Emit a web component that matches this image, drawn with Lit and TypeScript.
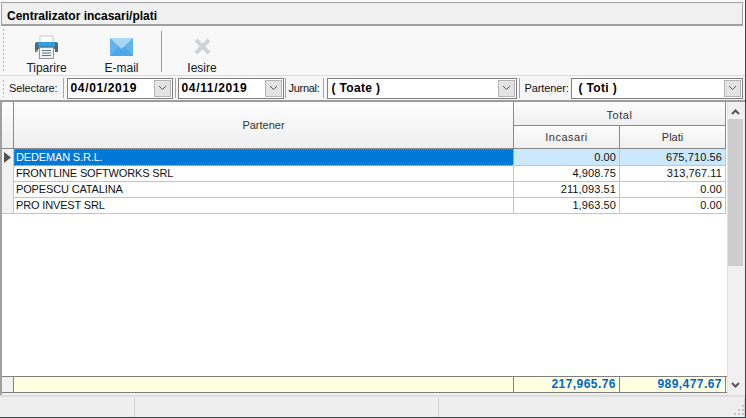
import { LitElement, html, css, svg } from "lit";
import { customElement } from "lit/decorators.js";

const rows = [
  ["DEDEMAN S.R.L.", "0.00", "675,710.56"],
  ["FRONTLINE SOFTWORKS SRL", "4,908.75", "313,767.11"],
  ["POPESCU CATALINA", "211,093.51", "0.00"],
  ["PRO INVEST SRL", "1,963.50", "0.00"],
];

const chevronDown = svg`<svg width="9" height="6" viewBox="0 0 9 6"><path d="M1 1l3.5 3.5L8 1" fill="none" stroke="#555" stroke-width="1"/></svg>`;

@customElement("app-root")
export class AppRoot extends LitElement {
  static styles = css`
    :host { display: flex; flex-direction: column; width: 746px; height: 418px; box-sizing: border-box; background: #f0f0f0; font-family: "Liberation Sans", Arial, sans-serif; font-size: 11px; color: #000; overflow: hidden; border-bottom: 1px solid #1f5050; border-right: 1px solid #1f5050; }
    .titlewrap { flex: none; background: #f8f8f8; padding: 2px 2px 0 1px; }
    .title { height: 24px; box-sizing: border-box; padding: 6px 0 0 5px; font-weight: bold; font-size: 12px; line-height: 14px; background: #f0f0f0; border-top: 1px solid #a0a0a0; border-left: 1px solid #a0a0a0; border-right: 1px solid #a0a0a0; border-bottom: 2px solid #a0a0a0; }
    .toolbar { height: 50px; flex: none; box-sizing: border-box; display: flex; background: #f8f8f8; border-bottom: 1px solid #dcdcdc; padding: 2px 0 0 2px; }
    .grip { width: 3px; margin-right: 4px; flex: none; background-image: radial-gradient(#b0b0b0 1px, transparent 1px); background-size: 3px 4px; height: 44px; }
    .grip.small { height: 18px; margin-right: 4px; }
    .tool { display: flex; flex-direction: column; align-items: center; width: 75px; font-size: 12px; line-height: 14px; color: #10202a; }
    .tool.wide { width: 80px; }
    .tool .ic { height: 30px; padding-top: 4px; display: flex; align-items: center; justify-content: center; }
    .sep { width: 1px; height: 41px; background: #9a9a9a; margin: 3px 0 0 2px; flex: none; }
    .filters { height: 26px; flex: none; box-sizing: border-box; display: flex; align-items: center; background: #f6f6f6; border-bottom: 2px solid #9c9c9c; padding: 0 2px 0 2px; }
    .lab { font-size: 11px; line-height: 20px; letter-spacing: -0.1px; color: #111; white-space: nowrap; }
    .lab.sel { padding-right: 5px; }
    .lab.jur { padding: 0 4px 0 3px; letter-spacing: -0.3px; }
    .lab.par { padding: 0 2px 0 4px; }
    .bar { width: 1px; height: 20px; background: #a8a8a8; flex: none; }
    .combo { height: 21px; box-sizing: border-box; border: 1px solid #7f7f7f; background: #fff; display: flex; align-items: center; font-weight: bold; font-size: 12px; padding: 0 1px 0 3px; }
    .combo span { flex: 1; white-space: pre; letter-spacing: 0.35px; margin-top: -1px; }
    .combo.date { width: 106px; margin: 0 2px 0 3px; }
    .combo.date span { letter-spacing: 0.65px; }
    .combo.date.second { margin: 0 1px 0 2px; width: 106px; }
    .combo.jurnal { width: 190px; margin: 0 2px 0 3px; }
    .combo.part { flex: 1; }
    .btn { width: 17px; height: 17px; background: #e3e3e3; border: 1px solid #b4b4b4; box-sizing: border-box; display: flex; align-items: center; justify-content: center; flex: none; }
    .body { flex: 1; min-height: 0; display: flex; background: #fff; border-left: 2px solid #a0a0a0; }
    .grid { width: 725px; flex: none; display: flex; flex-direction: column; min-width: 0; }
    .head { display: grid; grid-template-columns: 12px 500px 106px 106px; grid-template-rows: 24px 23px; flex: none; }
    .hc { background: linear-gradient(#fdfdfd, #efefef); border-right: 1px solid #8a8a8a; border-bottom: 1px solid #8a8a8a; box-sizing: border-box; display: flex; align-items: center; justify-content: center; color: #333; font-size: 11px; }
    .span2 { grid-row: span 2; }
    .span2c { grid-column: span 2; padding-top: 2px; letter-spacing: 0.6px; }
    .hc.wide { letter-spacing: 0.5px; }
    .rows { flex: 1; min-height: 0; }
    .row { display: grid; grid-template-columns: 12px 500px 106px 106px; height: 16px; box-sizing: border-box; line-height: 15px; font-size: 11px; color: #111; }
    .row > div { border-right: 1px solid #c4c4c4; border-bottom: 1px solid #c4c4c4; box-sizing: border-box; white-space: nowrap; }
    .ind { background: #f2f2f2; display: flex; align-items: center; justify-content: center; }
    .name { padding: 1px 0 0 2px; letter-spacing: -0.15px; }
    .num { text-align: right; padding: 1px 3px 0 0; letter-spacing: 0.1px; }
    .row.sel .name { background: #0078d7; color: #fff; outline: 1px dotted #e07020; outline-offset: -1px; }
    .row.sel .num { background: #cce8ff; }
    .foot { display: grid; grid-template-columns: 12px 500px 106px 106px; height: 15px; flex: none; border-top: 1px solid #808080; border-bottom: 1px solid #808080; }
    .foot > div { background: #ffffe1; border-right: 1px solid #808080; box-sizing: border-box; text-align: right; padding-right: 3px; font-weight: bold; font-size: 12px; line-height: 15px; color: #0066cc; letter-spacing: 0.45px; }
    .foot > .ind { background: #f2f2f2; padding: 0; }
    .gap { height: 2px; flex: none; background: #f0f0f0; }
    .scroll { flex: 1; background: #f0f0f0; border-left: 1px solid #e2e2e2; box-sizing: border-box; display: flex; flex-direction: column; align-items: flex-start; }
    .sb { width: 15px; height: 17px; flex: none; display: flex; align-items: center; justify-content: center; }
    .sb.up { padding-top: 3px; box-sizing: content-box; height: 14px; }
    .thumb { width: 15px; height: 147px; background: #cdcdcd; flex: none; }
    .sp { flex: 1; }
    .sb.down { margin-bottom: 2px; }
    .status { height: 22px; flex: none; box-sizing: border-box; display: grid; grid-template-columns: 135px 304px 1fr; background: #eeeeee; border-top: 2px solid #dcdcdc; padding-top: 1px; position: relative; }
    .status div { border-right: 1px solid #d4d4d4; }
    .status div:last-child { border-right: none; }
    .rz { position: absolute; right: 0; bottom: 1px; }
  `;

  private printer() {
    return svg`<svg width="23" height="24" viewBox="0 0 23 24">
      <rect x="5" y="1" width="13" height="8" fill="#fff" stroke="#c4c8cc"/>
      <path d="M2 7h19a2 2 0 0 1 2 2v8h-3v-3H3v3H0V9a2 2 0 0 1 2-2z" fill="#56676f"/>
      <rect x="3" y="7" width="17" height="4.5" fill="#2f9fe0"/>
      <rect x="1" y="15" width="2" height="2" fill="#5fc88a"/>
      <rect x="4.5" y="12.5" width="14" height="11" fill="#eef0f2" stroke="#8b979e"/>
      <path d="M7 15.5h9M7 18h9M7 20.5h9" stroke="#6c7a82" stroke-width="1.2"/>
    </svg>`;
  }
  private mail() {
    return svg`<svg width="23" height="18" viewBox="0 0 23 18">
      <rect width="23" height="18" fill="#62b3ed"/>
      <path d="M0 0h23L11.5 11z" fill="#a8d8f6"/>
      <path d="M0 18l9-9 2.5 2.5L14 9l9 9z" fill="#4ca6e8"/>
    </svg>`;
  }
  private close() {
    return svg`<svg width="17" height="17" viewBox="0 0 17 17"><path d="M2 2l13 13M15 2L2 15" stroke="#cfd3d6" stroke-width="4"/></svg>`;
  }

  render() {
    return html`
      <div class="titlewrap"><div class="title">Centralizator incasari/plati</div></div>
      <div class="toolbar">
        <div class="grip"></div>
        <div class="tool"><div class="ic">${this.printer()}</div>Tiparire</div>
        <div class="tool"><div class="ic">${this.mail()}</div>E-mail</div>
        <div class="sep"></div>
        <div class="tool wide"><div class="ic">${this.close()}</div>Iesire</div>
      </div>
      <div class="filters">
        <div class="grip small"></div>
        <div class="lab sel">Selectare:</div>
        <div class="bar"></div>
        <div class="combo date"><span>04/01/2019</span><div class="btn">${chevronDown}</div></div>
        <div class="bar"></div>
        <div class="combo date second"><span>04/11/2019</span><div class="btn">${chevronDown}</div></div>
        <div class="bar"></div>
        <div class="lab jur">Jurnal:</div>
        <div class="bar"></div>
        <div class="combo jurnal"><span>( Toate )</span><div class="btn">${chevronDown}</div></div>
        <div class="bar"></div>
        <div class="lab par">Partener:</div>
        <div class="combo part"><span> ( Toti )</span><div class="btn">${chevronDown}</div></div>
      </div>
      <div class="body">
        <div class="grid">
          <div class="head">
            <div class="hc span2"></div>
            <div class="hc span2">Partener</div>
            <div class="hc span2c">Total</div>
            <div class="hc wide">Incasari</div>
            <div class="hc">Plati</div>
          </div>
          <div class="rows">
            ${rows.map((r, i) => html`
              <div class="row ${i === 0 ? "sel" : ""}">
                <div class="ind">${i === 0 ? svg`<svg width="7" height="11" viewBox="0 0 7 11"><path d="M0 0l7 5.5L0 11z" fill="#555"/></svg>` : ""}</div>
                <div class="name">${r[0]}</div>
                <div class="num">${r[1]}</div>
                <div class="num">${r[2]}</div>
              </div>`)}
          </div>
          <div class="foot">
            <div class="ind"></div><div></div><div>217,965.76</div><div>989,477.67</div>
          </div>
          <div class="gap"></div>
        </div>
        <div class="scroll">
          <div class="sb up"><svg width="9" height="6" viewBox="0 0 9 6"><path d="M1 5l3.5-3.5L8 5" fill="none" stroke="#555" stroke-width="2"/></svg></div>
          <div class="thumb"></div>
          <div class="sp"></div>
          <div class="sb down"><svg width="9" height="6" viewBox="0 0 9 6"><path d="M1 1l3.5 3.5L8 1" fill="none" stroke="#555" stroke-width="2"/></svg></div>
        </div>
      </div>
      <div class="status">
        <div></div><div></div><div></div>
        <svg class="rz" width="12" height="12" viewBox="0 0 12 12" fill="#c4c4c4"><rect x="9" y="1" width="2" height="2"/><rect x="5" y="5" width="2" height="2"/><rect x="9" y="5" width="2" height="2"/><rect x="1" y="9" width="2" height="2"/><rect x="5" y="9" width="2" height="2"/><rect x="9" y="9" width="2" height="2"/></svg>
      </div>
    `;
  }
}
